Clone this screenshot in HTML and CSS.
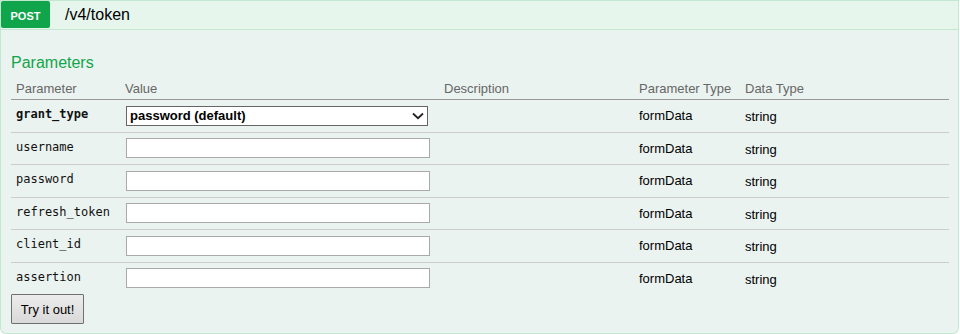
FILE: index.html
```html
<!DOCTYPE html>
<html lang="en">
<head>
  <meta charset="UTF-8">
  <meta name="viewport" content="width=device-width, initial-scale=1.0">
  <link rel="stylesheet" href="styles.css">
</head>
<body>
  <div class="operation">
    <div class="heading">
      <span class="method">POST</span>
      <span class="path">/v4/token</span>
    </div>

    <form class="content">
      <h4>Parameters</h4>
      <table class="params">
        <colgroup>
          <col class="col-name">
          <col class="col-value">
          <col class="col-desc">
          <col class="col-ptype">
          <col class="col-dtype">
        </colgroup>
        <thead>
          <tr>
            <th>Parameter</th>
            <th>Value</th>
            <th>Description</th>
            <th>Parameter Type</th>
            <th>Data Type</th>
          </tr>
        </thead>
        <tbody>
          <tr>
            <td class="code required">grant_type</td>
            <td>
              <div class="select-wrap">
                <select name="grant_type">
                  <option selected>password (default)</option>
                  <option>refresh_token</option>
                  <option>client_credentials</option>
                </select>
                <svg class="chevron" width="12" height="8" viewBox="0 0 12 8">
                  <path d="M1 1.5 L6 6.2 L11 1.5" fill="none" stroke="#222" stroke-width="1.8"/>
                </svg>
              </div>
            </td>
            <td></td>
            <td>formData</td>
            <td class="dtype">string</td>
          </tr>
          <tr>
            <td class="code">username</td>
            <td><input type="text" name="username"></td>
            <td></td>
            <td>formData</td>
            <td class="dtype">string</td>
          </tr>
          <tr>
            <td class="code">password</td>
            <td><input type="text" name="password"></td>
            <td></td>
            <td>formData</td>
            <td class="dtype">string</td>
          </tr>
          <tr>
            <td class="code">refresh_token</td>
            <td><input type="text" name="refresh_token"></td>
            <td></td>
            <td>formData</td>
            <td class="dtype">string</td>
          </tr>
          <tr>
            <td class="code">client_id</td>
            <td><input type="text" name="client_id"></td>
            <td></td>
            <td>formData</td>
            <td class="dtype">string</td>
          </tr>
          <tr>
            <td class="code">assertion</td>
            <td><input type="text" name="assertion"></td>
            <td></td>
            <td>formData</td>
            <td class="dtype">string</td>
          </tr>
        </tbody>
      </table>
      <button type="button" class="submit">Try it out!</button>
    </form>
  </div>
</body>
</html>
```

FILE: styles.css
```css
body {
  margin: 0;
  padding: 0;
  background: #fff;
  font-family: "Liberation Sans", Arial, sans-serif;
  color: #000;
}

.operation {
  width: 959px;
}

.heading {
  display: flex;
  height: 28px;
  background-color: #e7f6ec;
  border: 1px solid #c3e8d1;
}

.method {
  box-sizing: border-box;
  width: 49px;
  height: 27px;
  padding-top: 9px;
  background-color: #10a54a;
  border-radius: 2px;
  color: #fff;
  font-size: 11px;
  font-weight: bold;
  line-height: 13px;
  text-align: center;
}

.path {
  padding-left: 15px;
  font-size: 16px;
  line-height: 27px;
}

.content {
  margin: 0;
  padding: 23px 8px 9px 10px;
  background-color: #ebf3f0;
  border: 1px solid #c3e8d1;
  border-top: none;
  border-radius: 0 0 6px 6px;
}

h4 {
  margin: 0;
  color: #10a54a;
  font-size: 16px;
  font-weight: normal;
  line-height: 19px;
}

table.params {
  width: 938px;
  table-layout: fixed;
  border-collapse: collapse;
  font-size: 13px;
}

.col-name { width: 109px; }
.col-value { width: 319px; }
.col-desc { width: 195px; }
.col-ptype { width: 106px; }
.col-dtype { width: 209px; }

th {
  padding: 9px 5px 3px;
  color: #666;
  font-weight: normal;
  line-height: 15px;
  text-align: left;
  border-bottom: 1px solid #999;
}

td {
  padding: 5.5px 5px 6px;
  line-height: 15px;
  vertical-align: middle;
  border-bottom: 1px solid #ccc;
}

tbody tr:last-child td {
  border-bottom: none;
}

td.code {
  padding-top: 4.5px;
  padding-bottom: 7px;
  color: #111;
  font-family: "DejaVu Sans Mono", Consolas, monospace;
  font-size: 12px;
}

td.required {
  font-weight: bold;
}

td.dtype {
  padding-top: 6.5px;
  padding-bottom: 5px;
}

input[type="text"] {
  display: block;
  box-sizing: border-box;
  width: 304px;
  height: 20px;
  margin: 0 0 0 1px;
  padding: 1px 3px;
  background: #fff;
  border: 1px solid #a9a9a9;
  border-radius: 0;
  font-family: "Liberation Sans", Arial, sans-serif;
  font-size: 13px;
}

.select-wrap {
  position: relative;
  width: 302px;
  margin-left: 1px;
}

select {
  display: block;
  box-sizing: border-box;
  width: 302px;
  height: 20px;
  margin: 0;
  padding: 0 20px 0 3px;
  background: #fff;
  border: 1px solid #666;
  border-radius: 0;
  appearance: none;
  -webkit-appearance: none;
  color: #000;
  font-family: "Liberation Sans", Arial, sans-serif;
  font-size: 13px;
  font-weight: bold;
}

.chevron {
  position: absolute;
  right: 4px;
  top: 6px;
  pointer-events: none;
}

.submit {
  display: block;
  box-sizing: border-box;
  width: 73px;
  height: 30px;
  margin: 0;
  padding: 0;
  background: linear-gradient(#ececec, #d9d9d9);
  border: 1px solid #707070;
  border-radius: 1px;
  color: #000;
  font-family: "Liberation Sans", Arial, sans-serif;
  font-size: 13px;
  cursor: pointer;
}
```
